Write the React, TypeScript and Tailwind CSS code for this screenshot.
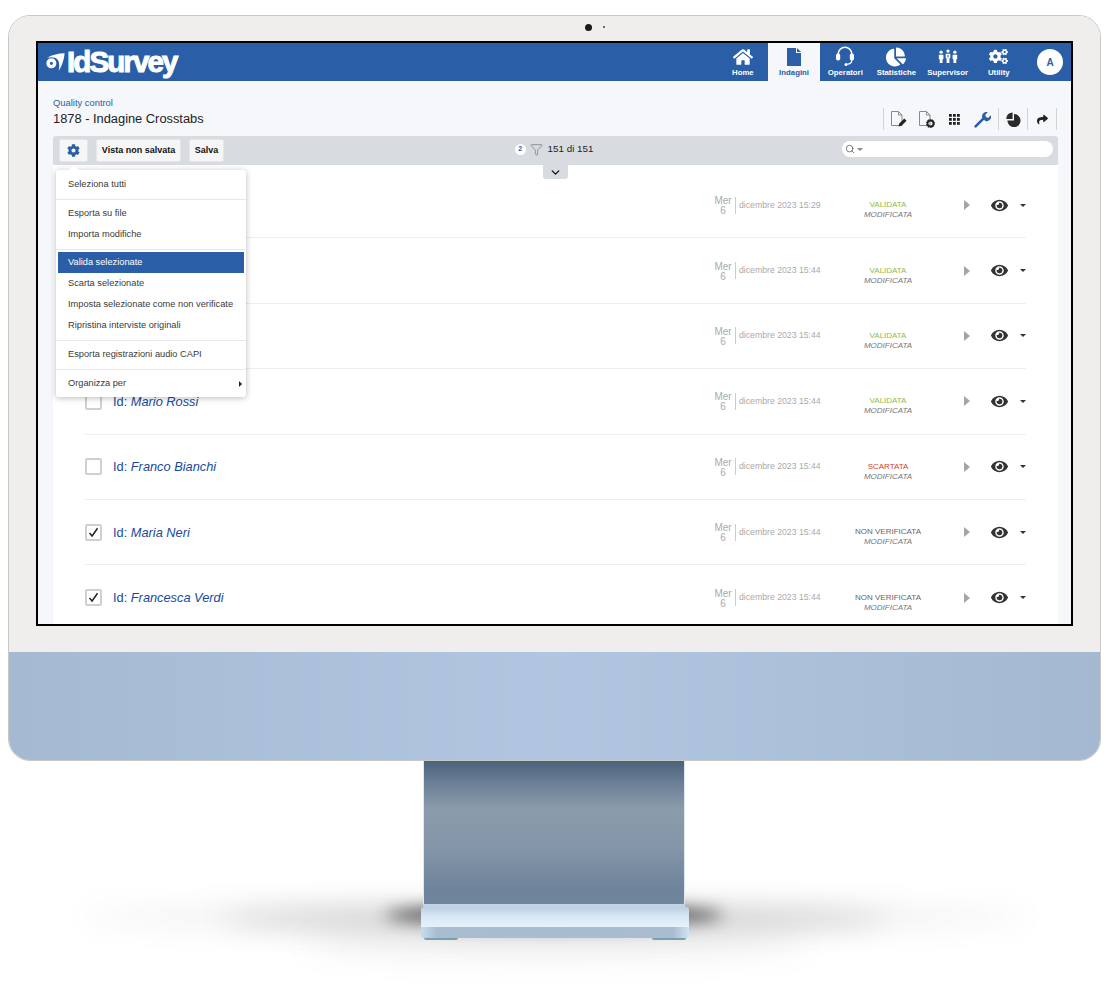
import { FaChartPie, FaCog, FaCogs, FaEye, FaHome, FaShare } from "react-icons/fa";
import { FiSearch } from "react-icons/fi";
import { ChevronDown, Filter } from "lucide-react";

type Row = { name?: string; time: string; status: string; checked?: boolean };

const rows: Row[] = [
  { time: "15:29", status: "VALIDATA" },
  { time: "15:44", status: "VALIDATA" },
  { time: "15:44", status: "VALIDATA" },
  { name: "Mario Rossi", time: "15:44", status: "VALIDATA" },
  { name: "Franco Bianchi", time: "15:44", status: "SCARTATA" },
  { name: "Maria Neri", time: "15:44", status: "NON VERIFICATA", checked: true },
  { name: "Francesca Verdi", time: "15:44", status: "NON VERIFICATA", checked: true },
];

const statusColor = (status: string) => {
  if (status === "VALIDATA") return "text-[#8dbb4f]";
  if (status === "SCARTATA") return "text-[#d8412a]";
  return "text-[#666]";
};

const DocIcon = ({ gear }: { gear?: boolean }) => (
  <svg width="18" height="18" viewBox="0 0 18 18" fill="none">
    <path d="M2.5 1.5h7l3.5 3.5v10.5h-10.5z M9.5 1.5v3.5h3.5" stroke="#8a8a8a" strokeWidth="1" />
    {gear ? (
      <g>
        <circle cx="13.5" cy="13.5" r="3" fill="none" stroke="#222" strokeWidth="1.8" />
        <circle cx="13.5" cy="13.5" r="4.1" fill="none" stroke="#222" strokeWidth="1" strokeDasharray="1.3 1.3" />
      </g>
    ) : (
      <path d="M9.5 16.5l.8-3 5-5 2.2 2.2-5 5z" fill="#222" />
    )}
  </svg>
);

const GridIcon = () => (
  <svg width="11" height="11" viewBox="0 0 11 11" fill="#222">
    {[0, 4, 8].map((y) =>
      [0, 4, 8].map((x) => <rect key={`${x}-${y}`} x={x} y={y} width="2.8" height="2.8" />)
    )}
  </svg>
);

const WrenchIcon = () => (
  <svg width="17" height="17" viewBox="0 0 17 17" fill="#2a5ea6">
    <path d="M1.6 15.4L9.4 7.6" stroke="#2a5ea6" strokeWidth="2.6" strokeLinecap="round" />
    <path d="M8.2 6.6a4.3 4.3 0 0 1 5.6-5.3l-2.6 2.7.8 2.1 2.1.8 2.6-2.6a4.3 4.3 0 0 1-5.4 5.6z" />
  </svg>
);

const PieIcon = () => (
  <svg width="15" height="15" viewBox="0 0 15 15" fill="#2a2a2a">
    <path d="M8 2a6.6 6.6 0 1 1-6.6 6.6H8z" />
    <path d="M6.6 0.4v6.6H0.2a6.5 6.5 0 0 1 6.4-6.6z" />
  </svg>
);

const SupervisorIcon = () => (
  <svg width="20" height="15" viewBox="0 0 22 17" fill="white">
    {[3.2, 11, 18.8].map((x) => (
      <g key={x}>
        <circle cx={x} cy={x === 11 ? 2.4 : 3.6} r={1.9} />
        <path d={`M${x - 2.6} ${x === 11 ? 5.4 : 6.6}h5.2v5h-1v${x === 11 ? 5.6 : 4.4}h-3.2v-${x === 11 ? 5.6 : 4.4}h-1z`} />
      </g>
    ))}
    <path d="M11 5.8l.7 2-.7 3-.7-3z" fill="#2a5ea6" />
  </svg>
);

const HeadsetIcon = () => (
  <svg width="20" height="21" viewBox="0 0 20 21" fill="none">
    <path d="M3.2 10V8a6.8 6.8 0 0 1 13.6 0V10" stroke="white" strokeWidth="1.6" />
    <path d="M16.8 14c0 2.6-2 4-4.6 4.2" stroke="white" strokeWidth="1.3" />
    <rect x="1" y="7.6" width="4.2" height="7" rx="1.8" fill="white" />
    <rect x="14.8" y="7.6" width="4.2" height="7" rx="1.8" fill="white" />
    <circle cx="11" cy="18.4" r="1.5" fill="white" />
  </svg>
);

const IndaginiIcon = () => (
  <svg width="14" height="18" viewBox="0 0 14 18" fill="#2a5ea6">
    <path d="M0 0h9v5h5v13H0z" />
    <path d="M10 0l4 4h-4z" />
  </svg>
);

const NavItem = ({ label, active, children }: { label: string; active?: boolean; children: React.ReactNode }) => (
  <div
    className={`w-[51.2px] h-full flex flex-col items-center pt-[3px] ${
      active ? "bg-[#f5f7fa] text-[#2a5ea6]" : "text-white"
    }`}
  >
    <div className="h-[21px] flex items-center justify-center">{children}</div>
    <span className="text-[7.8px] leading-[10px] mt-[0.5px] font-bold whitespace-nowrap">{label}</span>
  </div>
);

const MenuItem = ({ label, active, arrow }: { label: string; active?: boolean; arrow?: boolean }) => (
  <div
    className={`h-[21px] mx-[2px] pl-[10px] pr-[2px] flex items-center justify-between text-[9.25px] ${
      active ? "bg-[#2a5ea6] text-white" : "text-[#3a3a3a]"
    }`}
  >
    {label}
    {arrow && <span className="w-0 h-0 border-y-[3px] border-y-transparent border-l-[3px] border-l-[#222]" />}
  </div>
);

const MenuDivider = () => <div className="h-px bg-[#e8e8e8] my-[3.5px]" />;

const ListRow = ({ row }: { row: Row }) => (
  <div className="h-[65.4px] shrink-0 flex items-center border-b border-[#eeeeee]">
    <div className="w-[17px] h-[17px] border-2 border-[#d0d0d0] rounded-[2px] flex items-center justify-center bg-white">
      {row.checked && (
        <svg width="11" height="11" viewBox="0 0 11 11" fill="none">
          <path d="M1.5 6l2.6 3L9.5 1.2" stroke="#222" strokeWidth="1.5" />
        </svg>
      )}
    </div>
    <div className="ml-[11px] w-[601px] text-[12.8px] text-[#184a9c]">
      {row.name && (
        <>
          Id: <i>{row.name}</i>
        </>
      )}
    </div>
    <div className="w-[18px] mr-[3px] mt-[2px] text-center text-[10px] leading-[10px] text-[#aaa] shrink-0">
      Mer
      <br />6
    </div>
    <div className="w-px h-[17px] bg-[#ccc]" />
    <div className="ml-[3px] w-[88px] text-[8.7px] text-[#aaa] whitespace-nowrap">dicembre 2023 {row.time}</div>
    <div className="w-[137px] pr-[15px] mt-[10px] text-center text-[8px] leading-[10px]">
      <div className={statusColor(row.status)}>{row.status}</div>
      <div className="italic text-[#777]">MODIFICATA</div>
    </div>
    <span className="w-0 h-0 border-y-[5px] border-y-transparent border-l-[6px] border-l-[#a5a5a5]" />
    <FaEye className="ml-[20.5px] text-[#333]" size={17} />
    <span className="ml-[12.5px] w-0 h-0 border-x-[3px] border-x-transparent border-t-[3px] border-t-[#333]" />
  </div>
);

const Screen = () => (
  <div className="relative h-[585px] border-2 border-black bg-[#f5f7fa] overflow-hidden flex flex-col">
    <header className="h-[38px] shrink-0 bg-[#2a5ea6] flex items-stretch justify-between">
      <div className="flex items-center pl-[7px]">
        <svg width="20" height="20" viewBox="0 0 22 22" fill="white" className="mr-[2px]">
          <path d="M2 6.5C8 3 15 1.5 21.6 1.4 21 8 19 15 15 20.8 16.5 15 15.6 10 13.4 8 11 5.8 7 5.2 2 6.5z" />
          <circle cx="7" cy="12.5" r="3.6" fill="none" stroke="white" strokeWidth="3.8" />
        </svg>
        <span className="text-[29.5px] leading-none font-bold text-white tracking-[-1.9px] [-webkit-text-stroke:1px_white]">
          IdSurvey
        </span>
      </div>
      <nav className="flex items-stretch">
        <NavItem label="Home">
          <FaHome size={20} />
        </NavItem>
        <NavItem label="Indagini" active>
          <IndaginiIcon />
        </NavItem>
        <NavItem label="Operatori">
          <HeadsetIcon />
        </NavItem>
        <NavItem label="Statistiche">
          <FaChartPie size={20} />
        </NavItem>
        <NavItem label="Supervisor">
          <SupervisorIcon />
        </NavItem>
        <NavItem label="Utility">
          <FaCogs size={19} />
        </NavItem>
        <div className="w-[46.6px] flex items-center pl-[12.6px]">
          <div className="w-[26px] h-[26px] rounded-full bg-white flex items-center justify-center text-[10px] font-bold text-[#2a5ea6]">
            A
          </div>
        </div>
      </nav>
    </header>

    <div className="flex-1 min-h-0 pl-[15px] pr-[13px] flex flex-col">
      <div className="h-[55px] shrink-0 flex items-end justify-between pb-[6px]">
        <div>
          <div className="text-[9.4px] leading-[12px] text-[#2a5ea6]">Quality control</div>
          <div className="text-[12.85px] leading-[16px] mt-[2px] text-[#222] mb-[3px]">1878 - Indagine Crosstabs</div>
        </div>
        <div className="flex items-center h-[22px] pr-[1px]">
          <div className="w-px h-full bg-[#d4d4d4]" />
          <div className="w-[114px] flex items-center">
            <span className="w-[28px] flex justify-center">
              <DocIcon />
            </span>
            <span className="w-[28px] flex justify-center">
              <DocIcon gear />
            </span>
            <span className="w-[28px] flex justify-center">
              <GridIcon />
            </span>
            <span className="w-[28px] flex justify-center">
              <WrenchIcon />
            </span>
          </div>
          <div className="w-px h-full bg-[#d4d4d4]" />
          <div className="w-[28px] flex justify-center">
            <PieIcon />
          </div>
          <div className="w-px h-full bg-[#d4d4d4]" />
          <div className="w-[28px] flex justify-center pl-[1px]">
            <FaShare size={11} className="text-[#222]" />
          </div>
          <div className="w-px h-full bg-[#d4d4d4]" />
        </div>
      </div>

      <div className="relative h-[29px] shrink-0 bg-[#d8dce1] rounded-t-[3px] flex items-center justify-between pl-[6px] pr-[5px]">
        <div className="flex items-center gap-[8px]">
          <button className="w-[29px] h-[23px] bg-[#f6f6f6] border border-[#e4e6e8] rounded-[2px] flex items-center justify-center">
            <FaCog size={13} className="text-[#2a5ea6]" />
          </button>
          <button className="w-[85px] h-[23px] bg-[#f6f6f6] border border-[#e4e6e8] rounded-[2px] text-[9px] font-bold text-[#111]">
            Vista non salvata
          </button>
          <button className="w-[35px] h-[23px] bg-[#f6f6f6] border border-[#e4e6e8] rounded-[2px] text-[9px] font-bold text-[#111]">
            Salva
          </button>
        </div>
        <div className="flex items-center ml-[42px] -mt-[2px]">
          <span className="w-[11px] h-[11px] rounded-full bg-white text-[7px] font-bold text-[#2a5ea6] flex items-center justify-center">
            2
          </span>
          <Filter size={13} strokeWidth={1} className="ml-[4px] text-[#555]" />
          <span className="ml-[5px] text-[9.8px] text-[#222]">151 di 151</span>
        </div>
        <div className="w-[211px] h-[16px] -mt-[3px] rounded-full bg-white flex items-center pl-[3px] text-[#666]">
          <FiSearch size={10} />
          <span className="ml-[2px] w-0 h-0 border-x-[3px] border-x-transparent border-t-[3px] border-t-[#888]" />
        </div>
        <div className="absolute left-[490px] top-full w-[25px] h-[14px] bg-[#d8dce1] rounded-b-[3px] flex items-center justify-center z-10">
          <ChevronDown size={13} strokeWidth={2.5} className="text-[#111]" />
        </div>
      </div>

      <div className="flex-1 min-h-0 bg-white pl-[32px] pr-[32px] pt-[8px] flex flex-col overflow-hidden">
        {rows.map((row, i) => (
          <ListRow key={i} row={row} />
        ))}
      </div>
    </div>

    <div className="absolute left-[18px] top-[127px] w-[190px] h-[227px] bg-white rounded-[3px] shadow-[0_1px_6px_rgba(0,0,0,0.28)] z-20 pt-[4px]">
      <span className="absolute left-[13px] -top-[5px] w-0 h-0 border-x-[5px] border-x-transparent border-b-[5px] border-b-white" />
      <MenuItem label="Seleziona tutti" />
      <MenuDivider />
      <MenuItem label="Esporta su file" />
      <MenuItem label="Importa modifiche" />
      <div className="h-px bg-[#e8e8e8] mt-[3.5px] mb-[2.5px]" />
      <MenuItem label="Valida selezionate" active />
      <MenuItem label="Scarta selezionate" />
      <MenuItem label="Imposta selezionate come non verificate" />
      <MenuItem label="Ripristina interviste originali" />
      <MenuDivider />
      <MenuItem label="Esporta registrazioni audio CAPI" />
      <MenuDivider />
      <MenuItem label="Organizza per" arrow />
    </div>
  </div>
);

export default function App() {
  return (
    <div className="relative w-[1107px] h-[987px] bg-white overflow-hidden pl-[8px] pt-[15px] font-['Liberation_Sans',Arial,sans-serif]">
      <div className="w-[1093px] h-[746px] rounded-[22px] overflow-hidden flex flex-col border border-[#c9c8c5]">
        <div className="h-[636px] shrink-0 bg-[#efeeec] pt-[25px] px-[27px] relative">
          <div className="absolute left-[576px] top-[8px] w-[7px] h-[7px] rounded-full bg-[#1a1a1a]" />
          <div className="absolute left-[594px] top-[10px] w-[2px] h-[2px] rounded-full bg-[#444]" />
          <Screen />
        </div>
        <div className="flex-1 bg-gradient-to-r from-[#a5b9d3] via-[#b1c6e0] to-[#a4b8d2]" />
      </div>

      {/* floor shadow */}
      <div className="absolute left-[80px] top-[906px] w-[950px] h-[22px] rounded-[50%] bg-black/[0.07] blur-[14px]" />
      <div className="absolute left-[220px] top-[906px] w-[670px] h-[26px] rounded-[50%] bg-black/[0.14] blur-[14px]" />
      <div className="absolute left-[300px] top-[930px] w-[510px] h-[30px] rounded-[50%] bg-black/[0.05] blur-[14px]" />
      <div className="absolute left-[385px] top-[904px] w-[338px] h-[22px] rounded-[50%] bg-black/60 blur-[8px]" />

      <div className="relative ml-[412px] w-[270px] flex flex-col items-center">
        <div className="w-[262px] mr-[2px] h-[143px] bg-[linear-gradient(to_bottom,#4c627c_0%,#6a7f96_15%,#8a9bab_33%,#8496a8_60%,#6e849c_90%,#71869d_100%)] border-x border-[#dfe7ef]" />
        <div className="w-[262px] mr-[2px] h-[3px] bg-[#c3d3e3]" />
        <div className="w-[268px] h-[20px] rounded-t-[3px] bg-gradient-to-b from-[#bcd0e2] via-[#d8e8f5] to-[#e5f2fc]" />
        <div className="w-[268px] h-[11px] rounded-b-[3px] bg-[linear-gradient(to_right,#c6dcec_0%,#a9bcd0_6%,#aabccf_94%,#cfe3f3_100%)]" />
        <div className="w-[262px] h-[2px] flex justify-between">
          <div className="w-[34px] h-full rounded-b-full bg-[#7ba0b2]" />
          <div className="w-[34px] h-full rounded-b-full bg-[#7ba0b2]" />
        </div>
      </div>
    </div>
  );
}
